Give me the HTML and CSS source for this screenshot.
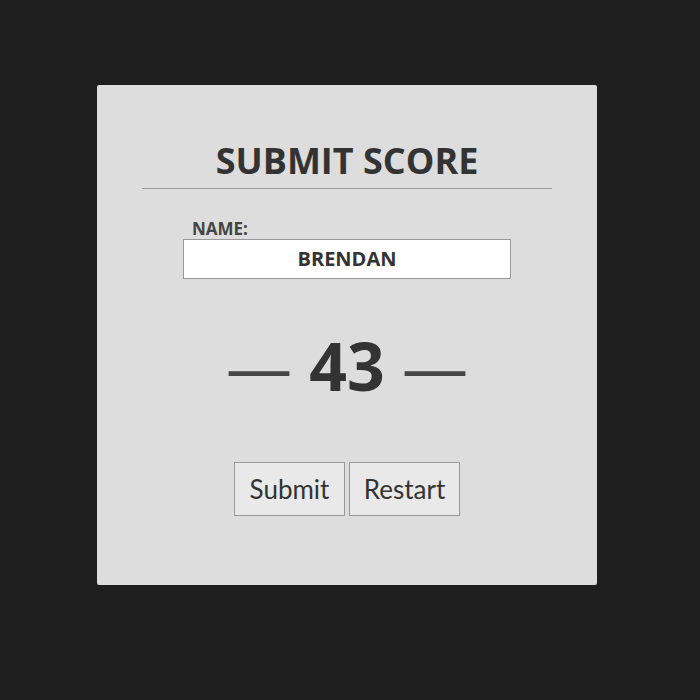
FILE: index.html
```html
<!DOCTYPE html>
<html>
<head>
<meta charset="utf-8">
<link rel="stylesheet" href="styles.css">
</head>
<body>
<div class="card">
  <h1 class="title">SUBMIT SCORE</h1>
  <div class="rule"></div>
  <div class="field">
    <label class="label">NAME:</label>
    <div class="input">BRENDAN</div>
  </div>
  <div class="score"><span class="dash">—</span> 43 <span class="dash">—</span></div>
  <div class="buttons">
    <button class="btn">Submit</button>
    <button class="btn">Restart</button>
  </div>
</div>
</body>
</html>
```
FILE: styles.css
```css
html, body {
  margin: 0;
  padding: 0;
  background: #1e1e1e;
}
body {
  font-family: "Open Sans", sans-serif;
  color: #333;
}
.card {
  width: 500px;
  height: 500px;
  margin: 85px 0 0 97px;
  background: #dddddd;
  border-radius: 2px;
  display: flex;
  flex-direction: column;
  align-items: center;
}
.title {
  margin: 52px 0 0;
  font-size: 36px;
  font-weight: 700;
  line-height: 48px;
  color: #333;
}
.rule {
  align-self: stretch;
  margin: 3px 45px 0;
  height: 1px;
  background: #9a9a9a;
}
.field {
  margin-top: 30px;
  width: 328px;
}
.label {
  display: block;
  font-size: 17px;
  font-weight: 700;
  color: #444;
  line-height: 20px;
  padding-left: 9px;
}
.input {
  height: 38px;
  border: 1px solid #999;
  background: #fff;
  font-size: 20px;
  font-weight: 700;
  line-height: 38px;
  text-align: center;
  color: #333;
}
.score {
  margin-top: 41px;
  font-size: 66px;
  font-weight: 700;
  line-height: 90px;
  color: #333;
}
.dash {
  font-weight: 400;
  color: #444;
}
.buttons {
  margin-top: 52px;
  display: flex;
  gap: 4px;
}
.btn {
  font-family: "Lato", sans-serif;
  font-size: 26px;
  font-weight: 400;
  color: #333;
  background: #e9e9e9;
  border: 1px solid #999;
  border-radius: 0;
  width: 111px;
  height: 54px;
  padding: 0;
}
```
